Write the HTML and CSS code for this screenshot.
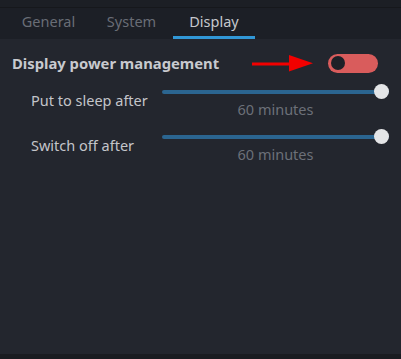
FILE: index.html
```html
<!DOCTYPE html>
<html>
<head>
<meta charset="utf-8">
<link rel="stylesheet" href="styles.css">
</head>
<body>
<div class="topstrip"></div>
<nav class="tabs">
  <div class="tab">General</div>
  <div class="tab">System</div>
  <div class="tab active">Display</div>
</nav>
<main class="content">
  <div class="header-row">
    <h1 class="heading">Display power management</h1>
    <svg class="arrow" width="61" height="17" viewBox="0 0 61 17">
      <rect x="0" y="7.5" width="39" height="3" fill="#f20000"/>
      <polygon points="37,0 61,8.3 37,16.5" fill="#f20000"/>
    </svg>
    <div class="toggle"><div class="toggle-knob"></div></div>
  </div>
  <div class="setting">
    <div class="label">Put to sleep after</div>
    <div class="slider-col">
      <div class="slider"><div class="track"></div><div class="knob"></div></div>
      <div class="value">60 minutes</div>
    </div>
  </div>
  <div class="setting">
    <div class="label">Switch off after</div>
    <div class="slider-col">
      <div class="slider"><div class="track"></div><div class="knob"></div></div>
      <div class="value">60 minutes</div>
    </div>
  </div>
</main>
<div class="bottomstrip"></div>
</body>
</html>
```

FILE: styles.css
```css
html, body {
  margin: 0;
  padding: 0;
}
body {
  width: 401px;
  height: 359px;
  display: flex;
  flex-direction: column;
  background: #23262e;
  font-family: "Noto Sans", "Open Sans", sans-serif;
  font-size: 14.5px;
  line-height: 20px;
  overflow: hidden;
}
.topstrip {
  height: 7px;
  background: #1c1f25;
  border-bottom: 1px solid #16181c;
}
.tabs {
  height: 31px;
  background: #1c1f26;
  display: flex;
  padding-left: 7px;
}
.tab {
  width: 83px;
  box-sizing: border-box;
  text-align: center;
  padding-top: 3px;
  color: #696d76;
  border-bottom: 3px solid transparent;
}
.tab.active {
  color: #c6c8cd;
  border-bottom-color: #3197d6;
  width: 82px;
}
.content {
  flex: 1;
  display: flex;
  flex-direction: column;
}
.header-row {
  display: flex;
  align-items: center;
  padding: 14px 23px 0 12px;
}
.heading {
  margin: 0;
  font-size: 14.8px;
  font-weight: bold;
  color: #c8cacf;
}
.arrow {
  margin-left: auto;
  margin-right: 15px;
  display: block;
}
.toggle {
  width: 50px;
  height: 19px;
  border-radius: 10px;
  background: #d95c5c;
  display: flex;
  align-items: center;
  padding-left: 3px;
  box-sizing: border-box;
}
.toggle-knob {
  width: 14px;
  height: 14px;
  border-radius: 50%;
  background: #1d2027;
}
.setting {
  display: grid;
  grid-template-columns: 131px 1fr;
  align-items: center;
  padding: 0 12px 0 31px;
  margin-top: 11px;
}
.setting + .setting {
  margin-top: 10px;
}
.label {
  color: #c3c5ca;
  padding-bottom: 4px;
}
.slider-col {
  display: flex;
  flex-direction: column;
}
.slider {
  position: relative;
  height: 15px;
  display: flex;
  align-items: center;
}
.track {
  flex: 1;
  height: 4px;
  border-radius: 2px;
  background: #2b6590;
}
.knob {
  position: absolute;
  right: 0;
  top: 0;
  width: 15px;
  height: 15px;
  border-radius: 50%;
  background: #e4e5e7;
}
.value {
  text-align: center;
  color: #6c7079;
}
.bottomstrip {
  height: 5px;
  background: #1a1c21;
}
```
